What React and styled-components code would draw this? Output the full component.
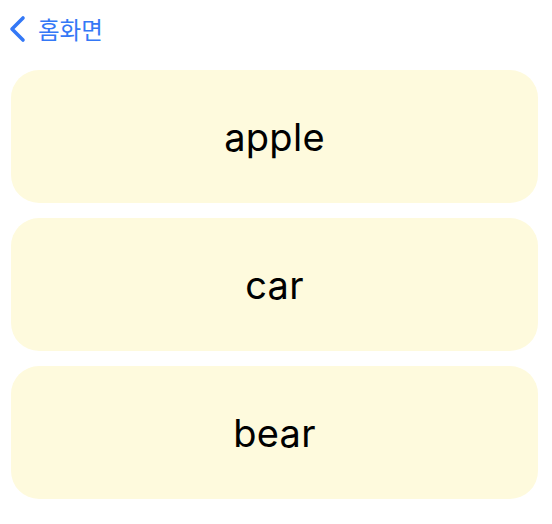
import React from "react";
import styled, { createGlobalStyle } from "styled-components";

const GlobalStyle = createGlobalStyle`
  body {
    margin: 0;
    background: #ffffff;
    font-family: Inter, "Noto Sans", "Noto Sans CJK KR", sans-serif;
  }
`;

const Page = styled.div`
  width: 552px;
  display: flex;
  flex-direction: column;
`;

const NavBar = styled.div`
  height: 58px;
  display: flex;
  align-items: center;
  padding-left: 8px;
`;

const BackButton = styled.button`
  display: flex;
  align-items: center;
  gap: 12px;
  border: none;
  background: none;
  padding: 0;
  color: #3478f6;
  cursor: pointer;
`;

const BackLabel = styled.span`
  font-family: "Noto Sans CJK KR", sans-serif;
  font-size: 23.5px;
  line-height: 28px;
  color: #3478f6;
`;

const WordList = styled.div`
  display: flex;
  flex-direction: column;
  gap: 15px;
  padding: 12px 14px 0 11px;
`;

const WordCard = styled.div`
  height: 133px;
  border-radius: 28px;
  background: #fefadd;
  display: flex;
  align-items: center;
  justify-content: center;
`;

const Word = styled.span`
  font-family: Inter, "Liberation Sans", sans-serif;
  font-size: 38px;
  color: #000000;
  letter-spacing: 0.3px;
`;

const words = ["apple", "car", "bear"];

const App = () => {
  return (
    <Page>
      <GlobalStyle />
      <NavBar>
        <BackButton>
          <svg width="18" height="28" viewBox="0 0 18 28">
            <path
              d="M15 3 L4 14 L15 25"
              fill="none"
              stroke="#3478f6"
              strokeWidth="3.6"
              strokeLinecap="round"
              strokeLinejoin="round"
            />
          </svg>
          <BackLabel>홈화면</BackLabel>
        </BackButton>
      </NavBar>
      <WordList>
        {words.map((w) => (
          <WordCard key={w}>
            <Word>{w}</Word>
          </WordCard>
        ))}
      </WordList>
    </Page>
  );
};

export default App;
